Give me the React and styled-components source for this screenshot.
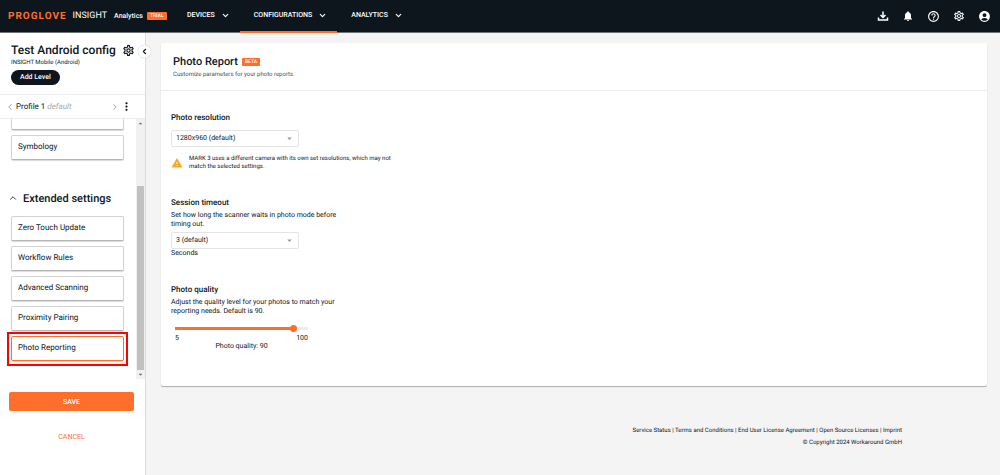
import React, { useState } from "react";
import styled, { createGlobalStyle, css } from "styled-components";
import {
  MdNotifications,
  MdHelpOutline,
  MdOutlineSettings,
  MdAccountCircle,
  MdWarning,
  MdMoreVert,
  MdArrowDropDown,
  MdArrowDropUp,
} from "react-icons/md";
import { ChevronDown, ChevronLeft, ChevronRight, ChevronUp } from "lucide-react";

const ink = "#0d161d";
const orange = "#ff6f2c";

const GlobalStyle = createGlobalStyle`
  *, *::before, *::after { box-sizing: border-box; }
  body {
    margin: 0;
    background: #f4f4f4;
    color: ${ink};
    font: 7px/9px Roboto, "Liberation Sans", sans-serif;
    text-rendering: geometricPrecision;
  }
  button, select, input { font: inherit; color: inherit; text-rendering: inherit; }
  a { color: inherit; text-decoration: none; }
  h1, h2, h3, p, ul { margin: 0; padding: 0; }
  ul { list-style: none; }
  svg { display: block; flex: none; }
`;

const Page = styled.div`
  min-height: 100vh;
  display: flex;
  flex-direction: column;
`;

const TopBar = styled.header`
  height: 33px;
  display: flex;
  background: ${ink};
  border-bottom: 1px solid #6d7276;
  color: #fff;
`;

const Brand = styled.a`
  width: 173px;
  padding-left: 8px;
  display: flex;
  align-items: center;
  font-size: 7px;
  font-weight: 500;
`;

const BrandName = styled.span`
  color: ${orange};
  font-size: 10px;
  font-weight: 700;
  letter-spacing: 1px;
`;

const BrandProduct = styled.span`
  margin: 0 7px 0 6px;
  font-size: 9px;
  font-weight: 400;
`;

const Tag = styled.span`
  height: 8px;
  padding: 0 3px;
  margin-left: 4px;
  border-radius: 1px;
  background: ${orange};
  color: #fff;
  font-size: 5px;
  line-height: 8px;
  font-weight: 500;
`;

const Nav = styled.nav`
  display: flex;
`;

const NavButton = styled.button`
  height: 33px;
  padding: 0 10px 0 14px;
  display: flex;
  align-items: center;
  gap: 6px;
  border: 0;
  border-bottom: 2px solid ${(p) => (p.$active ? orange : "transparent")};
  background: none;
  font-size: 7px;
  font-weight: 500;
`;

const Tools = styled.div`
  margin-left: auto;
  padding-right: 9px;
  display: flex;
  align-items: center;
  gap: 13px;
`;

const IconButton = styled.button`
  padding: 0;
  border: 0;
  background: none;
  color: ${(p) => p.$tone || "inherit"};
`;

const Body = styled.div`
  flex: 1;
  display: flex;
`;

const Sidebar = styled.aside`
  position: relative;
  width: 146px;
  height: calc(100vh - 33px);
  flex: none;
  display: flex;
  flex-direction: column;
  background: #fff;
  border-right: 1px solid #dcdcdc;
`;

const CollapseButton = styled.button`
  position: absolute;
  top: 12px;
  right: -6px;
  width: 13px;
  height: 13px;
  padding: 0;
  display: grid;
  place-items: center;
  border: 0;
  border-radius: 50%;
  background: #fff;
  box-shadow: 0 0 1px rgba(0, 0, 0, 0.3);
`;

const ConfigHead = styled.div`
  height: 62px;
  padding: 10px 11px 0;
  border-bottom: 1px solid #ececec;
`;

const ConfigTitle = styled.div`
  display: flex;
  align-items: center;
  gap: 6px;
  height: 15px;

  h1 {
    font-size: 12px;
    line-height: 15px;
    font-weight: 500;
    white-space: nowrap;
  }
`;

const ConfigKind = styled.p`
  font-size: 6px;
`;

const AddButton = styled.button`
  height: 15px;
  margin-top: 3px;
  padding: 0 9px;
  display: block;
  border: 0;
  border-radius: 8px;
  background: ${ink};
  color: #fff;
  font-size: 7px;
  font-weight: 500;
`;

const ProfileBar = styled.div`
  height: 24px;
  padding: 0 12px 0 5px;
  display: flex;
  align-items: center;
  border-bottom: 1px solid #ececec;
  font-size: 8px;

  em { color: #a3a7aa; }
  span { flex: 1; margin-left: 1px; }
`;

const ScrollArea = styled.div`
  flex: 1;
  min-height: 0;
  display: flex;
`;

const Settings = styled.div`
  flex: 1;
  padding: 0 12px 18px 11px;
  display: flex;
  flex-direction: column;
  justify-content: flex-end;
  overflow: hidden;
`;

const Items = styled.ul`
  flex: none;
  display: flex;
  flex-direction: column;
  gap: 5px;
`;

const Item = styled.li`
  position: relative;

  ${(p) =>
    p.$marked &&
    css`
      &::after {
        content: "";
        position: absolute;
        inset: -4px -4px -5px;
        border: 2px solid #ff0000;
        pointer-events: none;
      }
    `}
`;

const ItemButton = styled.button`
  width: 100%;
  height: 25px;
  padding: 0 6px 2px;
  display: block;
  border: 1px solid ${(p) => (p.$active ? orange : "#d3d3d3")};
  border-bottom-color: ${(p) => (p.$active ? orange : "#b5b5b5")};
  border-radius: 2px;
  box-shadow: 0 1px 1px rgba(0, 0, 0, 0.15);
  background: #fff;
  text-align: left;
  font-size: 8px;
`;

const GroupTitle = styled.h2`
  flex: none;
  height: 20px;
  margin: 28px 0 8px -3px;
  display: flex;
  align-items: center;
  gap: 5px;
  font-size: 11px;
  font-weight: 500;
`;

const Rail = styled.div`
  width: 9px;
  display: flex;
  flex-direction: column;
  justify-content: space-between;
  align-items: center;
  background: #f1f1f1;
  color: #6a6a6a;
`;

const Thumb = styled.div`
  width: 7px;
  height: 184px;
  margin-top: auto;
  background: #c1c1c1;
`;

const Actions = styled.div`
  height: 96px;
  padding: 13px 11px 0 9px;
  display: flex;
  flex-direction: column;
  gap: 16px;
`;

const ActionButton = styled.button`
  height: 19px;
  padding: 1px 0 0;
  border: 0;
  border-radius: 2px;
  background: ${(p) => (p.$primary ? orange : "none")};
  color: ${(p) => (p.$primary ? "#fff" : orange)};
  font-size: 7px;
  font-weight: ${(p) => (p.$primary ? 500 : 400)};
`;

const Main = styled.main`
  flex: 1;
  padding: 10px 13px 0 15px;
`;

const Card = styled.section`
  padding-bottom: 37px;
  border-radius: 2px;
  background: #fff;
  box-shadow: 0 1px 1px rgba(0, 0, 0, 0.3);
`;

const CardHead = styled.div`
  height: 48px;
  padding: 12px 12px 0;
  border-bottom: 1px solid #ececec;

  h2 {
    display: flex;
    align-items: center;
    font-size: 11px;
    line-height: 14px;
    font-weight: 500;
  }
  p { margin-top: 1px; color: #4a5157; font-size: 6px; }
`;

const Field = styled.div`
  width: 250px;
  padding: 0 10px;
  margin-top: ${(p) => p.$space}px;
  display: flex;
  flex-direction: column;
`;

const FieldLabel = styled.label`
  font-size: 8px;
  line-height: 12px;
  font-weight: 500;
`;

const Hint = styled.p`
  width: 180px;
  margin-top: 2px;
`;

const SelectBox = styled.div`
  position: relative;
  width: 128px;
  margin-top: ${(p) => p.$space}px;

  select {
    width: 100%;
    height: 17px;
    padding: 0 4px;
    display: block;
    appearance: none;
    border: 1px solid #e3e3e3;
    border-radius: 2px;
    background: #fff;
  }
  svg {
    position: absolute;
    top: 3px;
    right: 4px;
    color: #9a9a9a;
    pointer-events: none;
  }
`;

const Notice = styled.div`
  margin-top: 8px;
  display: flex;
  align-items: center;
  gap: 6px;
  font-size: 6px;
  line-height: 8px;

  svg { color: #f9a825; }
  p { width: 210px; }
`;

const Slider = styled.input`
  width: 139px;
  height: 8px;
  margin: 8px 0 0 1px;
  appearance: none;
  background: none;

  &::-webkit-slider-runnable-track {
    height: 3px;
    background: linear-gradient(
      to right,
      transparent 3px,
      ${orange} 3px,
      ${orange} ${(p) => p.$fill}%,
      #ececec ${(p) => p.$fill}%,
      #ececec calc(100% - 3px),
      transparent calc(100% - 3px)
    );
  }
  &::-webkit-slider-thumb {
    appearance: none;
    width: 7px;
    height: 7px;
    margin-top: -2px;
    border-radius: 50%;
    background: ${orange};
  }
`;

const Scale = styled.div`
  width: 133px;
  margin: 2px 0 0 4px;
  display: flex;
  justify-content: space-between;
`;

const Reading = styled.output`
  width: 141px;
  line-height: 6px;
  text-align: center;
`;

const Footer = styled.footer`
  padding: 39px 85px 20px 0;
  text-align: right;
  font-size: 6px;
  line-height: 12px;
`;

const DownloadIcon = () => (
  <svg width="12" height="12" viewBox="0 0 24 24" fill="none" stroke="currentColor" strokeWidth="3">
    <path d="M12 3v11M7 10l5 5 5-5M3 15v5h18v-5" />
  </svg>
);

const menus = ["DEVICES", "CONFIGURATIONS", "ANALYTICS"];
const extended = [
  "Zero Touch Update",
  "Workflow Rules",
  "Advanced Scanning",
  "Proximity Pairing",
  "Photo Reporting",
];
const links = [
  "Service Status",
  "Terms and Conditions",
  "End User License Agreement",
  "Open Source Licenses",
  "Imprint",
];

export default function App() {
  const [quality, setQuality] = useState(90);
  return (
    <Page>
      <GlobalStyle />
      <TopBar>
        <Brand href="#">
          <BrandName>PROGLOVE</BrandName>
          <BrandProduct>INSIGHT</BrandProduct>
          Analytics
          <Tag>TRIAL</Tag>
        </Brand>
        <Nav>
          {menus.map((name) => (
            <NavButton key={name} $active={name === "CONFIGURATIONS"}>
              {name}
              <ChevronDown size={9} strokeWidth={3} />
            </NavButton>
          ))}
        </Nav>
        <Tools>
          <IconButton aria-label="Downloads"><DownloadIcon /></IconButton>
          <IconButton aria-label="Notifications"><MdNotifications size={12} /></IconButton>
          <IconButton aria-label="Help"><MdHelpOutline size={13} /></IconButton>
          <IconButton aria-label="Settings"><MdOutlineSettings size={12} /></IconButton>
          <IconButton aria-label="Account"><MdAccountCircle size={13} /></IconButton>
        </Tools>
      </TopBar>
      <Body>
        <Sidebar>
          <CollapseButton aria-label="Collapse sidebar">
            <ChevronLeft size={9} strokeWidth={3} />
          </CollapseButton>
          <ConfigHead>
            <ConfigTitle>
              <h1>Test Android config</h1>
              <IconButton aria-label="Configuration settings"><MdOutlineSettings size={13} /></IconButton>
            </ConfigTitle>
            <ConfigKind>INSIGHT Mobile (Android)</ConfigKind>
            <AddButton>Add Level</AddButton>
          </ConfigHead>
          <ProfileBar>
            <IconButton $tone="#8a8f93" aria-label="Previous profile"><ChevronLeft size={10} /></IconButton>
            <span>Profile 1 <em>default</em></span>
            <IconButton $tone="#8a8f93" aria-label="Next profile"><ChevronRight size={10} /></IconButton>
            <IconButton aria-label="Profile menu"><MdMoreVert size={13} /></IconButton>
          </ProfileBar>
          <ScrollArea>
            <Settings>
              <Items>
                <Item><ItemButton aria-label="Previous setting" /></Item>
                <Item><ItemButton>Symbology</ItemButton></Item>
              </Items>
              <GroupTitle>
                <ChevronUp size={10} />
                Extended settings
              </GroupTitle>
              <Items>
                {extended.map((name) => (
                  <Item key={name} $marked={name === "Photo Reporting"}>
                    <ItemButton $active={name === "Photo Reporting"}>{name}</ItemButton>
                  </Item>
                ))}
              </Items>
            </Settings>
            <Rail>
              <MdArrowDropUp size={9} />
              <Thumb />
              <MdArrowDropDown size={9} />
            </Rail>
          </ScrollArea>
          <Actions>
            <ActionButton $primary>SAVE</ActionButton>
            <ActionButton>CANCEL</ActionButton>
          </Actions>
        </Sidebar>
        <Main>
          <Card>
            <CardHead>
              <h2>Photo Report <Tag>BETA</Tag></h2>
              <p>Customize parameters for your photo reports.</p>
            </CardHead>
            <Field $space={21}>
              <FieldLabel htmlFor="resolution">Photo resolution</FieldLabel>
              <SelectBox $space={6}>
                <select id="resolution"><option>1280x960 (default)</option></select>
                <MdArrowDropDown size={11} />
              </SelectBox>
              <Notice>
                <MdWarning size={12} />
                <p>MARK 3 uses a different camera with its own set resolutions, which may not match the selected settings.</p>
              </Notice>
            </Field>
            <Field $space={26}>
              <FieldLabel htmlFor="timeout">Session timeout</FieldLabel>
              <Hint>Set how long the scanner waits in photo mode before timing out.</Hint>
              <SelectBox $space={3}>
                <select id="timeout"><option>3 (default)</option></select>
                <MdArrowDropDown size={11} />
              </SelectBox>
              <span>Seconds</span>
            </Field>
            <Field $space={26}>
              <FieldLabel htmlFor="quality">Photo quality</FieldLabel>
              <Hint>Adjust the quality level for your photos to match your reporting needs. Default is 90.</Hint>
              <Slider
                id="quality"
                type="range"
                min="5"
                max="100"
                value={quality}
                $fill={quality - 2}
                onChange={(e) => setQuality(Number(e.target.value))}
              />
              <Scale><span>5</span><span>100</span></Scale>
              <Reading htmlFor="quality">Photo quality: {quality}</Reading>
            </Field>
          </Card>
          <Footer>
            <p>
              {links.map((name, i) => (
                <React.Fragment key={name}>
                  {i > 0 && " | "}
                  <a href="#">{name}</a>
                </React.Fragment>
              ))}
            </p>
            <p>© Copyright 2024 Workaround GmbH</p>
          </Footer>
        </Main>
      </Body>
    </Page>
  );
}
